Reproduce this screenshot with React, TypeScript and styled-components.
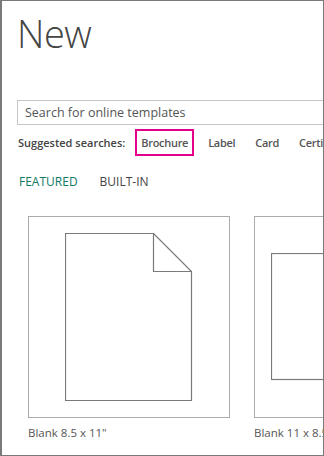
import React from 'react';
import styled, { createGlobalStyle } from 'styled-components';

const GlobalStyle = createGlobalStyle`
    html, body {
        margin: 0;
        padding: 0;
        background: #ffffff;
    }
    #root {
        width: 324px;
        height: 456px;
    }
`;

interface Template {
    id: number;
    name: string;
    landscape: boolean;
}

const suggestions = ['Brochure', 'Label', 'Card', 'Certificate'];

const templates: Template[] = [
    { id: 1, name: 'Blank 8.5 x 11"', landscape: false },
    { id: 2, name: 'Blank 11 x 8.5"', landscape: true },
];

const PortraitPage = () => (
    <svg width="128" height="169" viewBox="0 0 128 169">
        <path
            d="M0.5 0.5 H88.5 L126.5 38.5 V167.5 H0.5 Z"
            fill="#fff"
            stroke="#7a7a7a"
            strokeWidth="1.2"
        />
        <path
            d="M88.5 0.5 V38.5 H126.5"
            fill="none"
            stroke="#7a7a7a"
            strokeWidth="1.2"
        />
    </svg>
);

const LandscapePage = () => (
    <svg width="170" height="128" viewBox="0 0 170 128">
        <rect x="0.5" y="0.5" width="168" height="126" fill="#fff" stroke="#7a7a7a" strokeWidth="1.2" />
    </svg>
);

const App: React.FC = () => {
    return (
        <>
            <GlobalStyle />
            <Window>
                <Title>New</Title>
                <SearchBox>
                    <SearchInput placeholder="Search for online templates" readOnly />
                </SearchBox>
                <SuggestRow>
                    <SuggestLabel>Suggested searches:</SuggestLabel>
                    {suggestions.map((s, i) => (
                        <SuggestLink key={s} highlighted={i === 0}>
                            {s}
                        </SuggestLink>
                    ))}
                </SuggestRow>
                <Tabs>
                    <Tab active>FEATURED</Tab>
                    <Tab active={false}>BUILT-IN</Tab>
                </Tabs>
                <Gallery>
                    {templates.map(t => (
                        <Card key={t.id}>
                            <Thumb landscape={t.landscape}>
                                {t.landscape ? <LandscapePage /> : <PortraitPage />}
                            </Thumb>
                            <CardName>{t.name}</CardName>
                        </Card>
                    ))}
                </Gallery>
            </Window>
        </>
    );
};

const Window = styled.div`
    box-sizing: border-box;
    width: 324px;
    height: 456px;
    border: 1px solid #7a7a7a;
    border-left-width: 2px;
    overflow: hidden;
    padding-left: 15px;
    font-family: "Open Sans", "Liberation Sans", sans-serif;
    color: #444;
`;

const Title = styled.h1`
    margin: 0;
    padding-top: 7px;
    font-size: 38px;
    font-weight: 300;
    line-height: 50px;
    color: #444;
    letter-spacing: -0.5px;
`;

const SearchBox = styled.div`
    box-sizing: border-box;
    margin-top: 42px;
    width: 340px;
    height: 25px;
    border: 1px solid #c6c6c6;
    display: flex;
    align-items: center;
`;

const SearchInput = styled.input`
    border: none;
    outline: none;
    padding: 0 0 0 7px;
    width: 100%;
    font-family: inherit;
    font-size: 12.5px;
    color: #555;
    background: transparent;

    &::placeholder {
        color: #555;
    }
`;

const SuggestRow = styled.div`
    display: flex;
    align-items: center;
    margin-top: 4px;
    height: 27px;
    white-space: nowrap;
`;

const SuggestLabel = styled.span`
    font-size: 11px;
    font-weight: 600;
    color: #444;
    margin-left: 1px;
    margin-right: 10px;
`;

const SuggestLink = styled.span<{ highlighted: boolean }>`
    box-sizing: border-box;
    display: inline-flex;
    align-items: center;
    height: 27px;
    padding: 0 4px;
    margin-right: 8px;
    font-size: 11px;
    font-weight: 600;
    letter-spacing: -0.3px;
    color: #555;
    border: 2px solid ${props => (props.highlighted ? '#e3008c' : 'transparent')};
`;

const Tabs = styled.div`
    display: flex;
    gap: 22px;
    margin-top: 17px;
    margin-left: 2px;
`;

const Tab = styled.span<{ active: boolean }>`
    font-size: 12px;
    color: ${props => (props.active ? '#127a63' : '#444')};
`;

const Gallery = styled.div`
    display: flex;
    gap: 24px;
    margin-top: 26px;
    margin-left: 11px;
`;

const Card = styled.div`
    flex: none;
    display: flex;
    flex-direction: column;
`;

const Thumb = styled.div<{ landscape: boolean }>`
    box-sizing: border-box;
    width: 202px;
    height: 202px;
    border: 1px solid #ababab;
    display: flex;
    justify-content: ${props => (props.landscape ? 'flex-start' : 'center')};
    align-items: center;
    padding-left: ${props => (props.landscape ? '16px' : '0')};
`;

const CardName = styled.div`
    margin-top: 7px;
    font-size: 11.5px;
    color: #555;
`;

export default App;
